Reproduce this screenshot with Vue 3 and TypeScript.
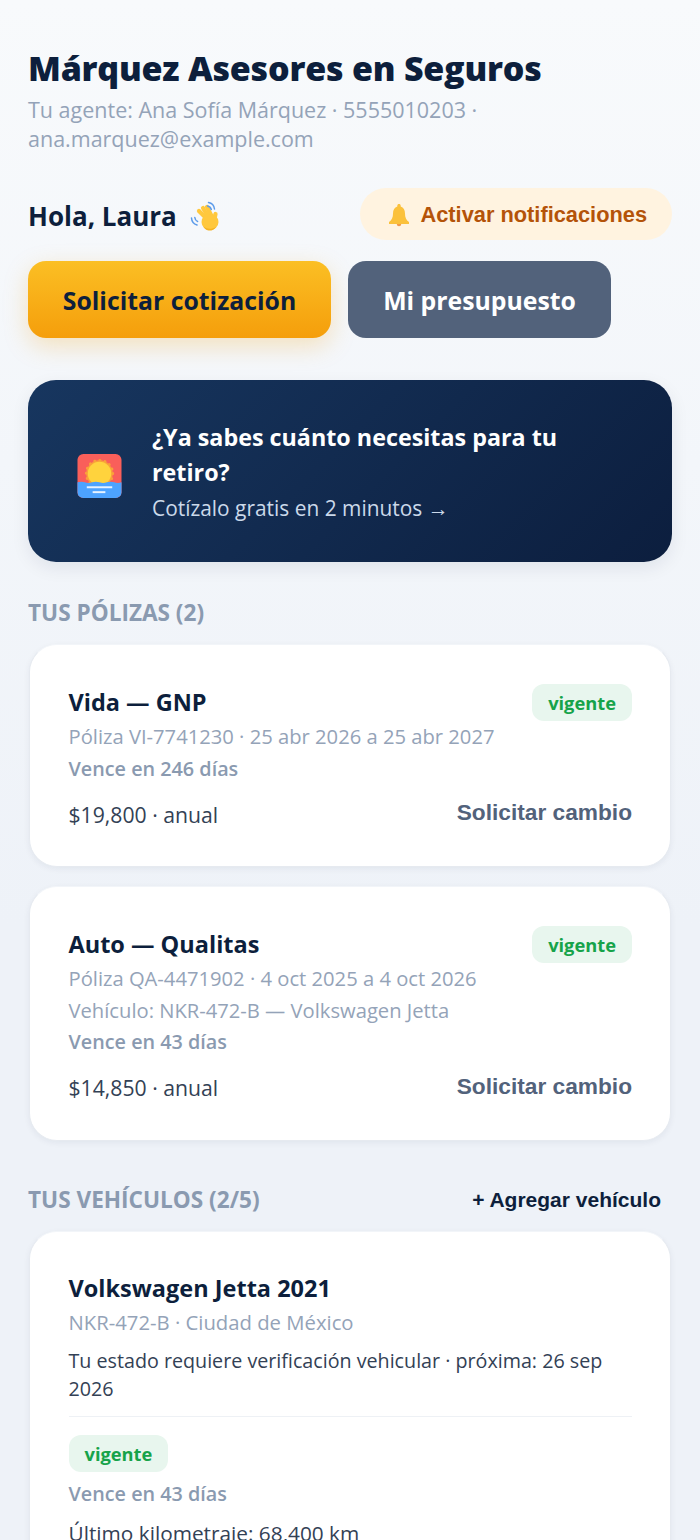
<template>
  <div class="page">
    <header class="brand">
      <h1>Márquez Asesores en Seguros</h1>
      <p>Tu agente: Ana Sofía Márquez · 5555010203 · ana.marquez@example.com</p>
    </header>

    <div class="greeting">
      <h2>
        Hola, Laura
        <svg class="wave" viewBox="0 0 32 32" width="32" height="32">
          <g fill="none" stroke="#ffc83d" stroke-width="4.200" stroke-linecap="round">
            <path d="M19 20 10 11" />
            <path d="M20 18 14 8" />
            <path d="M23 17 18 7" />
            <path d="M25 21 26.500 14" />
          </g>
          <ellipse cx="21" cy="22" rx="8.500" ry="8" fill="#ffc83d" />
          <path fill="#f5b324" d="M14 26c3 3 8 4 13 1-2 3-5 4-7.500 3.500-2.500-.4-4.500-2.200-5.500-4.500z" />
          <path fill="none" stroke="#5c9bea" stroke-width="1.500" stroke-linecap="round" d="M19.500 2.500c3 .5 5.500 3 6 6.500M18.500 6c2 .4 3.300 1.700 3.800 3.500M2.500 18c.2 3 2.200 6 5.500 7M5.800 17.500c.2 1.800 1.200 3.300 2.800 4" />
        </svg>
      </h2>
      <button class="notify" type="button">
        <svg viewBox="0 0 24 24" width="24" height="24">
          <path fill="#fbc13c" d="M12 1c-1 0-1.700.7-1.700 1.700v.8C7.500 4.400 6 7 6 10.500c0 4.300-1.200 6.500-4 8.500v2h20v-2c-2.800-2-4-4.200-4-8.500 0-3.500-1.500-6.100-4.300-7v-.8C13.700 1.700 13 1 12 1z" />
          <path fill="#f2994a" d="M9.800 21h4.400c0 1.300-1 2.300-2.200 2.300S9.800 22.300 9.800 21z" />
        </svg>
        Activar notificaciones
      </button>
    </div>

    <div class="actions">
      <button class="btn primary" type="button">Solicitar cotización</button>
      <button class="btn secondary" type="button">Mi presupuesto</button>
    </div>

    <section class="banner">
      <svg class="sunrise" viewBox="0 0 46 46" width="45" height="45">
        <rect x="0.500" y="0" width="45" height="45" rx="6" fill="#f95f5a" />
        <circle cx="23" cy="20" r="13.500" fill="#f9a13a" stroke="#f9a13a" stroke-width="3" stroke-linecap="round" stroke-dasharray="0.100 5.200" />
        <circle cx="23" cy="20" r="12" fill="#ffd33d" />
        <path fill="#4da3ff" d="M0.500 29c3-1 5-1 7.500 0s5 1 7.500 0 5-1 7.500 0 5 1 7.500 0 5-1 7.500 0 5 1 7.500 0v10a6 6 0 0 1-6 6H6.500a6 6 0 0 1-6-6z" />
        <rect x="10" y="33" width="26" height="2" fill="#e8f3ff" />
        <rect x="16" y="38" width="13" height="2" fill="#e8f3ff" />
      </svg>
      <div class="banner-text">
        <strong>¿Ya sabes cuánto necesitas para tu retiro?</strong>
        <span>Cotízalo gratis en 2 minutos →</span>
      </div>
    </section>

    <h3 class="section-title first">TUS PÓLIZAS ({{ policies.length }})</h3>

    <article v-for="policy in policies" :key="policy.number" class="card policy">
      <div class="policy-head">
        <div class="card-title">{{ policy.title }}</div>
        <span class="badge">vigente</span>
      </div>
      <p class="muted">Póliza {{ policy.number }} · {{ policy.period }}</p>
      <p v-if="policy.vehicle" class="muted">Vehículo: {{ policy.vehicle }}</p>
      <p class="expires">Vence en {{ policy.days }} días</p>
      <div class="policy-foot">
        <span class="price">{{ policy.price }} · anual</span>
        <button class="link" type="button">Solicitar cambio</button>
      </div>
    </article>

    <div class="section-row">
      <h3 class="section-title">TUS VEHÍCULOS (2/5)</h3>
      <button class="add" type="button">+ Agregar vehículo</button>
    </div>

    <article class="card vehicle">
      <div class="card-title">Volkswagen Jetta 2021</div>
      <p class="muted plate">NKR-472-B · Ciudad de México</p>
      <p class="note">Tu estado requiere verificación vehicular · próxima: 26 sep 2026</p>
      <hr />
      <span class="badge">vigente</span>
      <p class="expires after-badge">Vence en 43 días</p>
      <p class="note km">Último kilometraje: 68,400 km</p>
    </article>
  </div>
</template>

<script setup lang="ts">
interface Policy {
  title: string
  number: string
  period: string
  vehicle?: string
  days: number
  price: string
}

const policies: Policy[] = [
  {
    title: 'Vida — GNP',
    number: 'VI-7741230',
    period: '25 abr 2026 a 25 abr 2027',
    days: 246,
    price: '$19,800'
  },
  {
    title: 'Auto — Qualitas',
    number: 'QA-4471902',
    period: '4 oct 2025 a 4 oct 2026',
    vehicle: 'NKR-472-B — Volkswagen Jetta',
    days: 43,
    price: '$14,850'
  }
]
</script>

<style>
html,
body {
  margin: 0;
  height: 100%;
  overflow: hidden;
}
</style>

<style scoped>
.page {
  box-sizing: border-box;
  width: 700px;
  height: 1540px;
  overflow: hidden;
  padding: 44px 28px 0;
  background: linear-gradient(180deg, #f8fafc 0%, #eef2f8 60%);
  font-family: 'Open Sans', 'Noto Sans', sans-serif;
  color: #0d1f3c;
}

h1,
h2,
h3,
p {
  margin: 0;
}

button {
  border: none;
  cursor: pointer;
  font-family: 'Liberation Sans', Arial, sans-serif;
}

.brand h1 {
  font-size: 34px;
  line-height: 48px;
  font-weight: 800;
  letter-spacing: -0.22px;
}

.brand p {
  margin-top: 3px;
  font-size: 21.5px;
  line-height: 29px;
  color: #94a3b8;
}

.greeting {
  display: flex;
  align-items: center;
  justify-content: space-between;
  margin-top: 35px;
}

.greeting h2 {
  display: flex;
  align-items: center;
  gap: 12px;
  padding-top: 4px;
  font-size: 26px;
  font-weight: 700;
}

.notify {
  display: flex;
  align-items: center;
  gap: 9px;
  height: 52px;
  padding: 2px 25px 0 27px;
  border-radius: 26px;
  background: #fff3e0;
  color: #b45309;
  font-size: 21.8px;
  font-weight: 700;
}

.actions {
  display: flex;
  gap: 17px;
  margin-top: 21px;
}

.btn {
  height: 77px;
  border-radius: 18px;
  font-family: 'Open Sans', sans-serif;
  font-size: 24.8px;
  font-weight: 700;
}

.primary {
  width: 303px;
  background: linear-gradient(180deg, #fbbf24, #f59e0b);
  color: #0d1f3c;
  box-shadow: 0 8px 24px rgba(245, 158, 11, 0.25);
}

.secondary {
  width: 263px;
  background: #52627b;
  color: #fff;
}

.banner {
  display: flex;
  align-items: center;
  gap: 30px;
  height: 182px;
  box-sizing: border-box;
  margin-top: 42px;
  padding: 0 49px;
  border-radius: 28px;
  background: linear-gradient(135deg, #17365f, #0c1e3e);
  box-shadow: 0 6px 18px rgba(15, 31, 61, 0.08);
  color: #fff;
}

.sunrise {
  flex: none;
  margin-top: 10px;
}

.banner-text {
  padding-top: 2px;
}

.banner-text strong {
  display: block;
  font-size: 23.3px;
  line-height: 35px;
  font-weight: 700;
}

.banner-text span {
  display: block;
  margin-top: 2px;
  font-size: 20.9px;
  line-height: 32px;
  color: #cbd9ea;
}

.section-title {
  font-size: 22.6px;
  line-height: 30px;
  font-weight: 700;
  color: #8a9ab0;
}

.section-title.first {
  margin: 36px 0 16px;
}

.card {
  box-sizing: border-box;
  margin: 0 1px;
  border: 1px solid #e6eaf0;
  border-top-color: #f2f5f9;
  border-radius: 28px;
  background: #fff;
  box-shadow: 0 2px 6px rgba(15, 31, 61, 0.06);
  padding: 39px 38px 35.5px 38.5px;
}

.policy + .policy {
  margin-top: 19px;
}

.policy-head {
  display: flex;
  align-items: flex-start;
  justify-content: space-between;
}

.card-title {
  font-size: 23.5px;
  line-height: 36px;
  font-weight: 700;
}

.badge {
  display: inline-block;
  padding: 0 16px;
  height: 37px;
  line-height: 37px;
  border-radius: 12px;
  background: #e8f6ee;
  color: #16a34a;
  font-size: 18.3px;
  font-weight: 700;
}

.muted {
  font-size: 20.2px;
  line-height: 31.5px;
  color: #94a3b8;
}

.expires {
  font-size: 19.8px;
  line-height: 31.5px;
  font-weight: 600;
  color: #8a9ab0;
}

.policy-foot {
  display: flex;
  align-items: center;
  justify-content: space-between;
  margin-top: 14.5px;
}

.price {
  font-size: 21.2px;
  line-height: 32px;
  color: #334155;
}

.link {
  padding: 0;
  margin-bottom: 4px;
  background: none;
  color: #52627b;
  font-size: 22.7px;
  font-weight: 700;
}

.section-row {
  display: flex;
  align-items: center;
  justify-content: space-between;
  margin: 44px 0 16px;
}

.add {
  padding: 0 11px 0 0;
  background: none;
  color: #0d1f3c;
  font-size: 21px;
  font-weight: 700;
}

.vehicle {
  padding-top: 38px;
}

.plate {
  margin-top: 1px;
  font-size: 20.3px;
}

.note {
  margin-top: 8.5px;
  font-size: 19.7px;
  line-height: 28px;
  color: #334155;
}

hr {
  height: 1px;
  margin: 13px 0 18px;
  border: none;
  background: #eef1f5;
}

.after-badge {
  margin-top: 6px;
}

.km {
  margin-top: 10px;
  font-size: 20.8px;
}
</style>
